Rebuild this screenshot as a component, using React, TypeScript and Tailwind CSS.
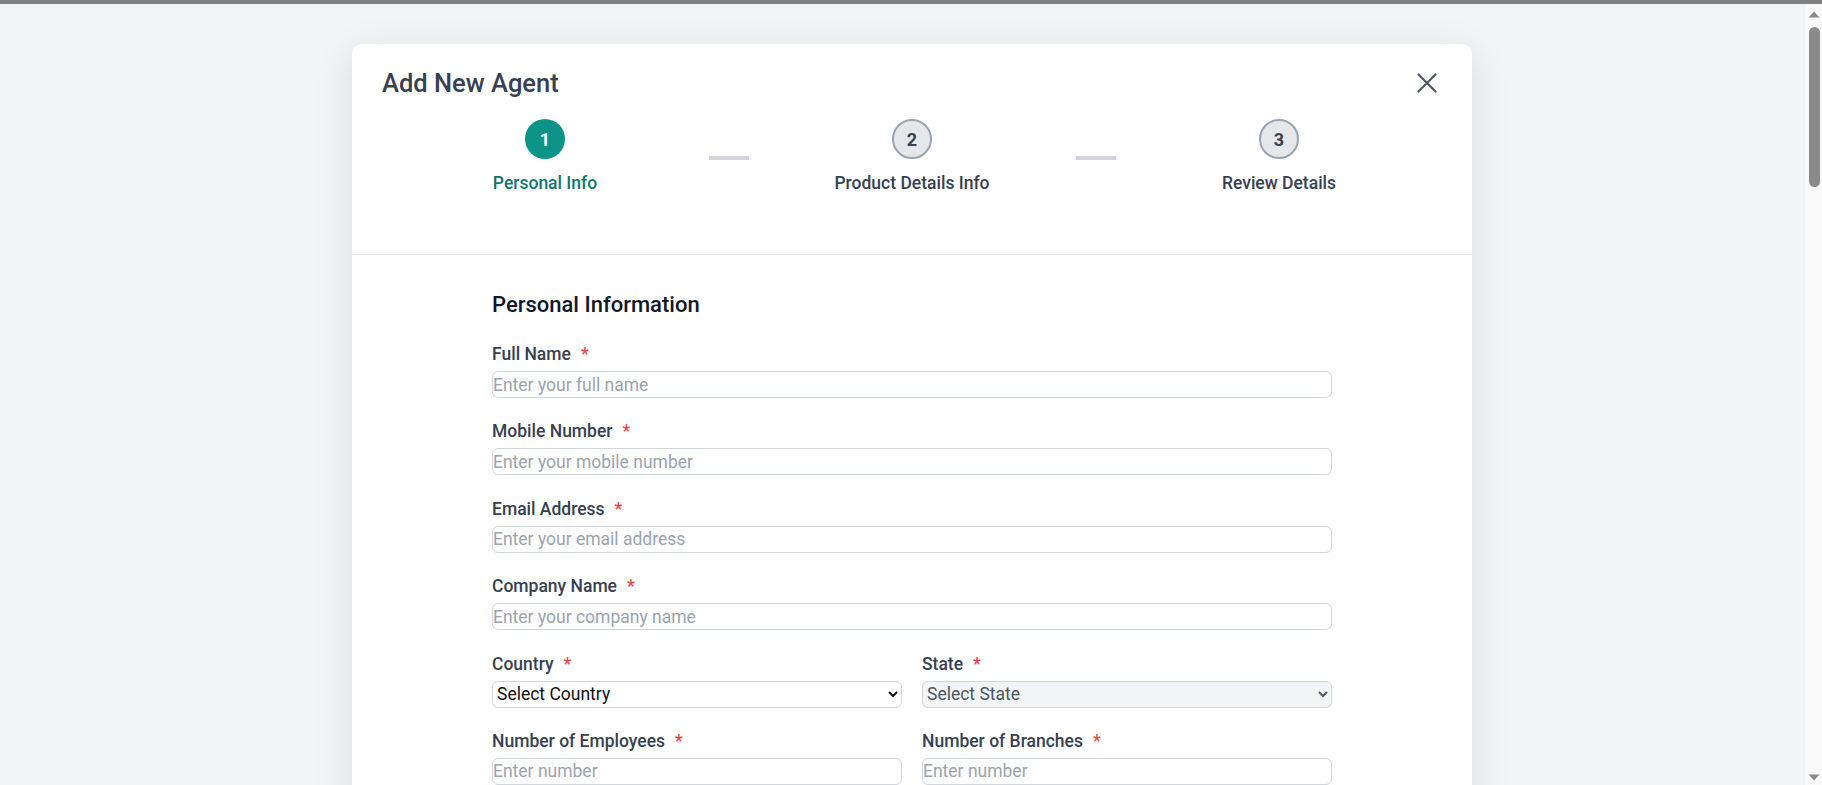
import React from "react";

function Req() {
  return <span className="ml-[10px] text-[#ef4444]">*</span>;
}

function Field({ label, placeholder }: { label: string; placeholder: string }) {
  return (
    <div className="flex flex-col">
      <label className="block text-[17.5px] leading-[26px] font-medium text-[#374151]">
        {label}
        <Req />
      </label>
      <input
        className="mt-1 block h-[27px] w-full rounded-[6px] border border-solid border-[#d1d5dc] bg-white text-[17.5px] text-[#111827] outline-none placeholder:text-[#9ca3af]"
        placeholder={placeholder}
      />
    </div>
  );
}

function Step({ n, label, active }: { n: string; label: string; active?: boolean }) {
  return (
    <div className="flex w-[241px] flex-col items-center">
      {active ? (
        <div className="flex h-10 w-10 items-center justify-center rounded-full bg-[#0d9488] text-[18px] font-bold text-white">
          {n}
        </div>
      ) : (
        <div className="flex h-10 w-10 items-center justify-center rounded-full border-2 border-solid border-[#9ca3af] bg-[#e5e7eb] text-[18px] font-bold text-[#374151]">
          {n}
        </div>
      )}
      <div
        className={
          active
            ? "mt-[11px] text-[17.5px] leading-[26px] font-medium text-[#0f766e]"
            : "mt-[11px] text-[17.5px] leading-[26px] font-medium text-[#374151]"
        }
      >
        {label}
      </div>
    </div>
  );
}

function ScrollBar() {
  return (
    <div className="flex w-[17px] shrink-0 flex-col bg-[#f9f9f9]">
      <svg className="ml-[3px] mt-[7px]" width="12" height="7" viewBox="0 0 12 7">
        <path d="M6 0.5L11.5 6.5H0.5Z" fill="#8b8b8b" />
      </svg>
      <div className="ml-[4px] mt-[9px] h-[160px] w-[11px] rounded-full bg-[#8b8b8b]" />
      <div className="flex-1" />
      <svg className="mb-[4px] ml-[3px]" width="12" height="7" viewBox="0 0 12 7">
        <path d="M0.5 0.5H11.5L6 6.5Z" fill="#8b8b8b" />
      </svg>
    </div>
  );
}

export default function App() {
  return (
    <div className="flex h-[785px] flex-col overflow-hidden font-['Roboto',sans-serif]">
      <div className="h-[4px] shrink-0 bg-[#808080]" />
      <div className="flex min-h-0 flex-1">
        <div className="min-w-0 flex-1 overflow-hidden bg-[#f3f4f6] pt-[40px]">
          <div className="ml-[352px] w-[1120px] rounded-[10px] bg-white shadow-[0_10px_40px_rgba(0,0,0,0.10)]">
            {/* Header */}
            <div className="border-b border-solid border-[#e5e7eb] px-[30px] pt-[23px] pb-[58px]">
              <div className="flex items-center justify-between">
                <h2 className="text-[25.5px] leading-8 font-medium text-[#374151]">Add New Agent</h2>
                <button className="mr-[5px] text-[#4b5563]" aria-label="Close">
                  <svg width="20" height="20" viewBox="0 0 20 20" fill="none" stroke="currentColor" strokeWidth="2.2" strokeLinecap="round">
                    <path d="M1.5 1.5L18.5 18.5M18.5 1.5L1.5 18.5" />
                  </svg>
                </button>
              </div>
              <div className="mt-[20px] flex items-center justify-center gap-[43px]">
                <Step n="1" label="Personal Info" active />
                <div className="h-[4px] w-[40px] bg-[#d1d5db]" />
                <Step n="2" label="Product Details Info" />
                <div className="h-[4px] w-[40px] bg-[#d1d5db]" />
                <Step n="3" label="Review Details" />
              </div>
            </div>

            {/* Body */}
            <div className="mx-auto w-[840px] pt-[34px] pb-10">
              <h3 className="mb-5 text-[22px] leading-8 font-medium text-[#111827]">Personal Information</h3>
              <div className="flex flex-col gap-[20.4px]">
                <Field label="Full Name" placeholder="Enter your full name" />
                <Field label="Mobile Number" placeholder="Enter your mobile number" />
                <Field label="Email Address" placeholder="Enter your email address" />
                <Field label="Company Name" placeholder="Enter your company name" />
                <div className="grid grid-cols-2 gap-x-5 gap-y-[20.4px]">
                  <div className="flex flex-col">
                    <label className="block text-[17.5px] leading-[26px] font-medium text-[#374151]">
                      Country
                      <Req />
                    </label>
                    <select className="mt-1 block h-[27px] w-full rounded-[6px] border border-solid border-[#d1d5dc] bg-white text-[17.5px] text-[#111111]">
                      <option>Select Country</option>
                      <option>India</option>
                      <option>United States</option>
                    </select>
                  </div>
                  <div className="flex flex-col">
                    <label className="block text-[17.5px] leading-[26px] font-medium text-[#374151]">
                      State
                      <Req />
                    </label>
                    <select
                      disabled
                      className="mt-1 block h-[27px] w-full rounded-[6px] border border-solid border-[#d1d5dc] bg-[#f3f4f6] text-[17.5px] text-[#4b5563]"
                    >
                      <option>Select State</option>
                    </select>
                  </div>
                  <Field label="Number of Employees" placeholder="Enter number" />
                  <Field label="Number of Branches" placeholder="Enter number" />
                </div>
                <Field label="Address" placeholder="Enter your address" />
                <Field label="City" placeholder="Enter your city" />
              </div>
            </div>
          </div>
        </div>
        <ScrollBar />
      </div>
    </div>
  );
}
